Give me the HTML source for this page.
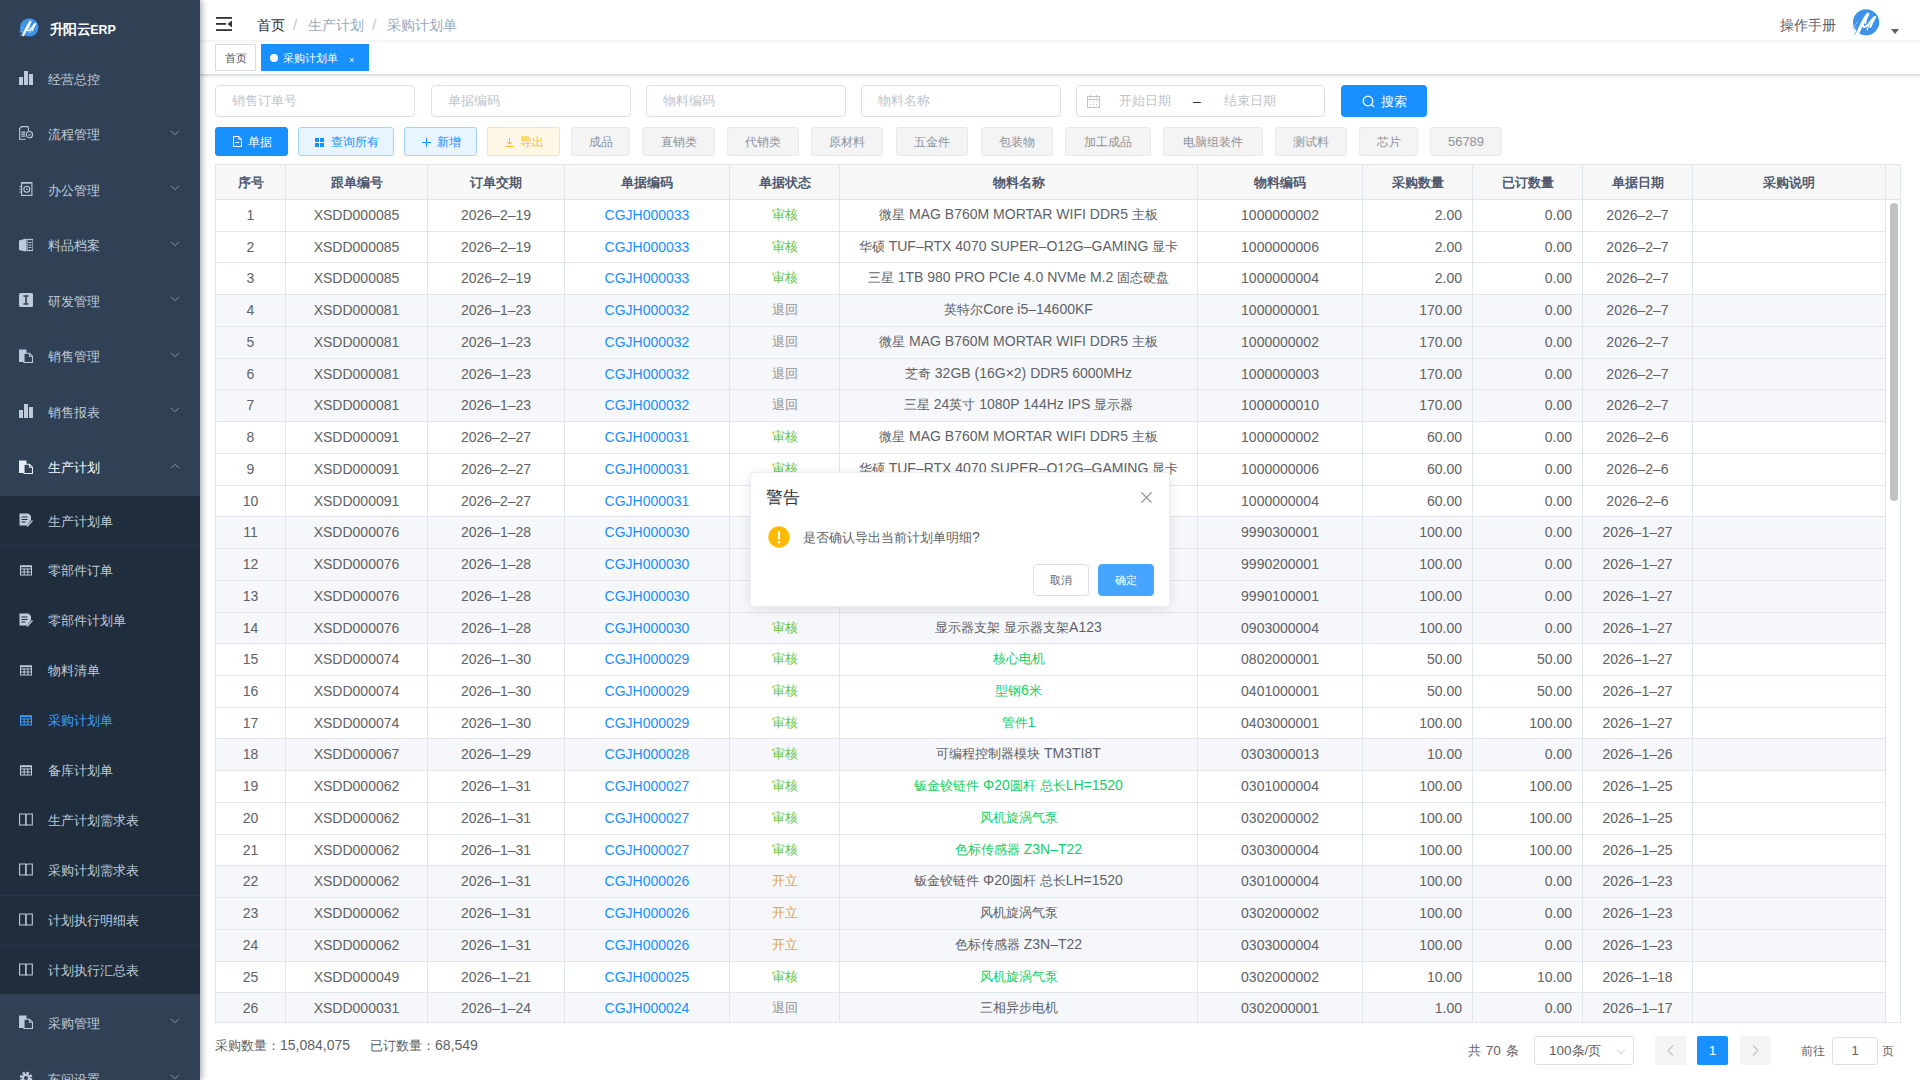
<!DOCTYPE html>
<html><head><meta charset="utf-8"><title>采购计划单</title><style>
*{box-sizing:border-box}
html,body{margin:0;padding:0;width:1920px;height:1080px;overflow:hidden;background:#fff;font-family:"Liberation Sans",sans-serif;color:#606266}
.sidebar{position:absolute;left:0;top:0;width:200px;height:1080px;background:#304156;box-shadow:2px 0 6px rgba(0,21,41,.35);z-index:5;overflow:hidden}
.logo{position:absolute;left:0;top:0;width:200px;height:50px}
.logoimg{position:absolute;left:19.5px;top:17.8px;width:19px;height:19px}
.logoimg svg{display:block}
.logotitle{position:absolute;left:50px;top:19px;line-height:20px;font-size:12.5px;font-weight:600;color:#fff}
.logotitle .z{font-size:14px;letter-spacing:-0.6px}
.mi{position:absolute;left:0;width:200px;height:56px}
.si{position:absolute;left:0;width:200px;height:50px}
.mic{position:absolute;left:19px;top:50%;margin-top:-7px;width:14px;height:14px}
.mic svg{display:block}
.mt{position:absolute;left:48px;top:50%;margin-top:-8.5px;line-height:20px;font-size:13.5px;color:#bfcbd9;white-space:nowrap}
.arr{position:absolute;left:170px;top:50%;margin-top:-4px;width:10px;height:6px}
.arr svg{display:block}
.subbg{position:absolute;left:0;top:496px;width:200px;height:498px;background:#1f2d3d}
.sline{position:absolute;left:0;width:200px;height:1px;background:#263445}
.navbar{position:absolute;left:200px;top:0;width:1720px;height:40px;background:#fff;box-shadow:0 1px 4px rgba(0,21,41,.08);z-index:3}
.hamb{position:absolute;left:16px;top:17px;width:16px;height:14px}
.hamb svg{display:block}
.bc{position:absolute;left:57px;top:14.6px;line-height:20px;font-size:14px;white-space:nowrap}
.bc .b1{color:#303133}
.bc .b2{color:#97a8be}
.bc .sep{color:#c0c4cc;margin:0 11px 0 8px;font-weight:400;font-size:15px}
.bc .z{font-size:1em}
.mt .z{font-size:0.985em}
.manual .z{font-size:1em}
.manual{position:absolute;left:1580px;top:15px;line-height:20px;font-size:14px;color:#5a5e66}
.avatar{position:absolute;left:1653px;top:8.5px;width:27px;height:27px}
.avatar svg{display:block}
.caret{position:absolute;left:1691px;top:29px;width:0;height:0;border-left:4px solid transparent;border-right:4px solid transparent;border-top:5px solid #5a5e66}
.tags{position:absolute;left:200px;top:40px;width:1720px;height:35px;background:#fff;border-bottom:1px solid #d8dce5;box-shadow:0 1px 3px 0 rgba(0,0,0,.12),0 0 3px 0 rgba(0,0,0,.04);z-index:2}
.tag{position:absolute;top:4px;height:27px;line-height:27px;font-size:12px;border:1px solid #d8dce5;color:#495060;background:#fff;padding:0 8px;white-space:nowrap}
.t1{left:15px;width:41px;text-align:center;padding:0}
.t2{left:61px;width:108px;background:#1890ff;border-color:#1890ff;color:#fff;padding-left:8px;font-size:11.5px}
.t2 .dot{display:inline-block;width:8px;height:8px;border-radius:50%;background:#fff;margin-right:5px;vertical-align:0px}
.t2 .tx{display:inline-block;font-size:9px;margin-left:11px;transform:translateY(1px)}
.inp{position:absolute;top:85px;width:200px;height:32px;border:1px solid #dcdfe6;border-radius:4px;background:#fff;font-size:14px;color:#c0c4cc;line-height:28px;padding-left:16px;white-space:nowrap}
.date{padding-left:0}
.date .cal{position:absolute;left:10px;top:9px}
.date .cal svg{display:block}
.date .ds1{position:absolute;left:42px}
.date .dsep{position:absolute;left:116px;color:#303133;top:1px}
.date .ds2{position:absolute;left:147px}
.sbtn{position:absolute;top:85px;width:86px;height:32px;border-radius:4px;background:#1890ff;color:#fff;font-size:14px;line-height:32px;padding-left:21px;white-space:nowrap}
.sbtn svg{position:absolute;left:21px;top:10px}
.sbtn > span{position:absolute;left:40px}
.btn{position:absolute;top:127px;height:29px;border-radius:3px;border:1px solid;font-size:13px;line-height:27px;text-align:center;white-space:nowrap}
.btn svg{display:inline-block;vertical-align:-0.5px;margin-right:8px;position:relative;left:1.6px}
.primary{background:#1890ff;border-color:#1890ff;color:#fff}
.pplain{background:#e8f4ff;border-color:#a3d3ff;color:#1890ff}
.wplain{background:#fff8e6;border-color:#ffe399;color:#ffba00}
.info{background:#f4f4f5;border-color:#e9e9eb;color:#909399}
.tblwrap{position:absolute;left:215px;top:164px;width:1686px;height:859px;border:1px solid #dfe6ec;border-right:none;overflow:hidden}
.tblwrap table{border-collapse:separate;border-spacing:0;table-layout:fixed}
.thead{position:absolute;left:0;top:0;height:36px;width:1685px;background:#f8f8f9}
.thead th{height:35px;padding:1.8px 0 0;font-size:14px;font-weight:700;color:#515a6e;background:#f8f8f9;border-right:1px solid #dfe6ec;border-bottom:1px solid #dfe6ec;text-align:center;white-space:nowrap}
.thead th.gut{border-right:1px solid #dfe6ec}
.tbody{position:absolute;left:0;top:35px;width:1670px}
.tbody td{height:31.74px;padding:0 10px 0.8px;font-size:14px;color:#606266;border-right:1px solid #dfe6ec;border-bottom:1px solid #dfe6ec;white-space:nowrap;overflow:hidden;background:#fff}
.tbody tr.grey td{background:#f5f7fa}
td.c{text-align:center}
td.r{text-align:right}
.link{color:#1890ff}
.st-ok{color:#67c23a}
.st-back{color:#909399}
.st-open{color:#e6a23c}
.nm-g{color:#13ce66}
.gutcol{position:absolute;left:1670px;top:35px;width:15px;height:830px;background:#fff;border-right:1px solid #dfe6ec}
.vscroll{position:absolute;left:1674px;top:38px;width:8px;height:298px;border-radius:4px;background:#c1c1c1}
.sum{position:absolute;left:215px;top:1035px;line-height:20px;font-size:14px;color:#606266;white-space:nowrap}
.pg{position:absolute;left:0;top:0}
.total{position:absolute;left:1468px;top:1041px;line-height:20px;font-size:13.5px;word-spacing:1px;color:#606266;white-space:nowrap}
.psel{position:absolute;left:1534px;top:1036px;width:100px;height:29px;border:1px solid #dcdfe6;border-radius:3px;font-size:13.5px;line-height:28px;padding-left:14px;color:#606266}
.pselarr{position:absolute;left:81px;top:12px}
.pselarr svg{display:block}
.pbtn{position:absolute;top:1036px;width:31px;height:29px;background:#f4f4f5;border-radius:2px}
.pbtn svg{position:absolute;left:12px;top:9px}
.pnum{position:absolute;left:1697px;top:1036px;width:31px;height:29px;background:#1890ff;color:#fff;border-radius:2px;font-size:13.5px;font-weight:400;line-height:29px;text-align:center}
.goto{position:absolute;left:1801px;top:1041px;line-height:20px;font-size:13px;color:#606266;white-space:nowrap}
.pinp{position:absolute;left:1832px;top:1037px;width:46px;height:28px;border:1px solid #dcdfe6;border-radius:3px;font-size:13px;line-height:26px;text-align:center;color:#606266}
.ye{position:absolute;left:1882px;top:1041px;line-height:20px;font-size:13px;color:#606266}
.mbox{position:absolute;left:750px;top:472px;width:420px;height:135px;background:#fff;border:1px solid #ebeef5;border-radius:4px;box-shadow:0 2px 12px 0 rgba(0,0,0,.1);z-index:10}
.mtitle{position:absolute;left:15px;top:14px;line-height:20px;font-size:18px;color:#303133}
.mclose{position:absolute;left:390px;top:18.6px;width:11px;height:11px}
.mclose svg{display:block}
.mwarn{position:absolute;left:17px;top:53px;width:22px;height:22px}
.mwarn svg{display:block}
.mmsg{position:absolute;left:52px;top:54px;line-height:20px;font-size:14px;color:#606266}
.mb{position:absolute;top:91px;height:32px;border-radius:4px;font-size:12px;line-height:30px;text-align:center;border:1px solid}
.cancel{left:282px;width:56px;background:#fff;border-color:#dcdfe6;color:#606266}
.ok{left:347px;width:56px;background:#46a6ff;border-color:#46a6ff;color:#fff}
.z{font-size:0.95em}</style></head>
<body>
<div class="sidebar"><div class="logo"><div class="logoimg"><svg width="19" height="19" viewBox="0 0 27 27" style="overflow:visible"><circle cx="13.1" cy="13.3" r="13.1" fill="#3d92ea"/><g fill="none" stroke="#fff" stroke-linecap="round" stroke-linejoin="round"><path d="M4.6 24.3 C7.8 17.5 11 10 14.8 5.3" stroke-width="3.2"/><path d="M14.8 5.6 C13.6 8.6 12.6 11.6 12.2 14" stroke-width="2"/><path d="M9.9 13.6 C9.7 15.6 10 17.8 11 18 C13 18 16 15 18.2 11.8 C19.2 10 20.5 8.4 22.2 8" stroke-width="2"/><path d="M21.8 8.4 C20 11.5 18.5 15 17.3 17.8" stroke-width="2.2"/><path d="M16.4 14.2 L14.1 21" stroke-width="1.1"/><path d="M-0.3 19.6 L4.6 12.8" stroke="#9cc6f3" stroke-width="0.9"/><path d="M1.4 25.4 L4.2 21.6" stroke="#9cc6f3" stroke-width="1.3"/><path d="M0.5 21.5 L2.5 19" stroke="#b5d5f6" stroke-width="0.8"/></g></svg></div><div class="logotitle"><span class="z">升阳云</span>ERP</div></div><div class="mi" style="top:50.00px"><span class="mic"><svg width="14" height="14" viewBox="0 0 14 14"><rect x="0" y="6" width="4" height="8" fill="#bfcbd9"/><rect x="5" y="0" width="4" height="14" fill="#bfcbd9"/><rect x="10" y="3" width="4" height="11" fill="#bfcbd9"/></svg></span><span class="mt" style="color:#bfcbd9"><span class="z">经营总控</span></span></div><div class="mi" style="top:105.57px"><span class="mic"><svg width="14" height="15" viewBox="0 0 14 15" fill="none" stroke="#bfcbd9" stroke-width="1.1" style="margin-top:-0.3px"><path d="M9.4 5V1.6Q9.4 0.6 8.4 0.6H2.6L0.6 2.6V13.3H6.5"/><path d="M2.3 6.2h4.2M2.3 8.2h3.8M2.3 10.2h3.8" stroke-width="1.3"/><circle cx="10.4" cy="8.6" r="3.1"/><path d="M9.1 8.7l1 1 1.7-1.9" stroke-width="1"/></svg></span><span class="mt" style="color:#bfcbd9"><span class="z">流程管理</span></span><span class="arr"><svg width="10" height="6" viewBox="0 0 10 6" fill="none" stroke="#909399" stroke-width="1"><path d="M1 0.8L5 4.8L9 0.8"/></svg></span></div><div class="mi" style="top:161.14px"><span class="mic"><svg width="14" height="14" viewBox="0 0 14 14" fill="none" stroke="#bfcbd9" stroke-width="1.1"><rect x="2.6" y="0.6" width="10.3" height="12.8"/><path d="M2.6 0.9h10.3" stroke-width="1.5"/><circle cx="7.8" cy="7.3" r="3"/><path d="M7.8 5.7v1.8h1.4" stroke-width="0.9"/><path d="M0.5 4.5h2M0.5 7.3h2M0.5 10h2"/></svg></span><span class="mt" style="color:#bfcbd9"><span class="z">办公管理</span></span><span class="arr"><svg width="10" height="6" viewBox="0 0 10 6" fill="none" stroke="#909399" stroke-width="1"><path d="M1 0.8L5 4.8L9 0.8"/></svg></span></div><div class="mi" style="top:216.71px"><span class="mic"><svg width="14" height="14" viewBox="0 0 14 14"><path d="M0 2.5L7 0.5V13.5L0 12Z" fill="#bfcbd9"/><rect x="8" y="1.5" width="6" height="11" fill="none" stroke="#bfcbd9" stroke-width="1.2"/><path d="M9.5 4.5h3M9.5 7h3M9.5 9.5h3" stroke="#bfcbd9" stroke-width="1.2"/></svg></span><span class="mt" style="color:#bfcbd9"><span class="z">料品档案</span></span><span class="arr"><svg width="10" height="6" viewBox="0 0 10 6" fill="none" stroke="#909399" stroke-width="1"><path d="M1 0.8L5 4.8L9 0.8"/></svg></span></div><div class="mi" style="top:272.28px"><span class="mic"><svg width="14" height="14" viewBox="0 0 14 14"><rect x="0" y="0" width="14" height="14" rx="1.5" fill="#bfcbd9"/><path d="M4.5 3h5M4.5 11h5M7 3v8" stroke="#304156" stroke-width="1.6"/></svg></span><span class="mt" style="color:#bfcbd9"><span class="z">研发管理</span></span><span class="arr"><svg width="10" height="6" viewBox="0 0 10 6" fill="none" stroke="#909399" stroke-width="1"><path d="M1 0.8L5 4.8L9 0.8"/></svg></span></div><div class="mi" style="top:327.85px"><span class="mic"><svg width="14" height="14" viewBox="0 0 14 14"><path d="M0 0.5h7.5v12.5H0Z" fill="#bfcbd9"/><path d="M5 4.2h5.5l3 3V13.5H5Z" fill="#304156" stroke="#bfcbd9" stroke-width="1.1"/><path d="M10.5 4.2V7.2h3" fill="none" stroke="#bfcbd9" stroke-width="1.1"/></svg></span><span class="mt" style="color:#bfcbd9"><span class="z">销售管理</span></span><span class="arr"><svg width="10" height="6" viewBox="0 0 10 6" fill="none" stroke="#909399" stroke-width="1"><path d="M1 0.8L5 4.8L9 0.8"/></svg></span></div><div class="mi" style="top:383.42px"><span class="mic"><svg width="14" height="14" viewBox="0 0 14 14"><rect x="0" y="6" width="4" height="8" fill="#bfcbd9"/><rect x="5" y="0" width="4" height="14" fill="#bfcbd9"/><rect x="10" y="3" width="4" height="11" fill="#bfcbd9"/></svg></span><span class="mt" style="color:#bfcbd9"><span class="z">销售报表</span></span><span class="arr"><svg width="10" height="6" viewBox="0 0 10 6" fill="none" stroke="#909399" stroke-width="1"><path d="M1 0.8L5 4.8L9 0.8"/></svg></span></div><div class="mi" style="top:438.99px"><span class="mic"><svg width="14" height="14" viewBox="0 0 14 14"><path d="M0 0.5h7.5v12.5H0Z" fill="#e8eef5"/><path d="M5 4.2h5.5l3 3V13.5H5Z" fill="#304156" stroke="#e8eef5" stroke-width="1.1"/><path d="M10.5 4.2V7.2h3" fill="none" stroke="#e8eef5" stroke-width="1.1"/></svg></span><span class="mt" style="color:#fff"><span class="z">生产计划</span></span><span class="arr"><svg width="10" height="6" viewBox="0 0 10 6" fill="none" stroke="#909399" stroke-width="1"><path d="M1 5.2L5 1.2L9 5.2"/></svg></span></div><div class="subbg"></div><div class="si" style="top:495.00px"><span class="mic"><svg width="14" height="14" viewBox="0 0 14 14"><path d="M0.5 0.5h9l2.5 2.5v4l-4 5.5H0.5Z" fill="#bfcbd9"/><path d="M2.5 4h6M2.5 6.5h6M2.5 9h4" stroke="#1f2d3d" stroke-width="1.2"/><path d="M8 13.5l5.5-6" stroke="#bfcbd9" stroke-width="1.3"/></svg></span><span class="mt" style="color:#bfcbd9"><span class="z">生产计划单</span></span></div><div class="si" style="top:544.90px"><span class="mic"><svg width="14" height="14" viewBox="0 0 14 14" fill="none" stroke="#bfcbd9" stroke-width="1"><rect x="1.5" y="2.8" width="11" height="9.2"/><path d="M1.5 3.5h11" stroke-width="1.4"/><path d="M1.5 6h11M1.5 9h11M5.2 5.5v6.5M8.8 5.5v6.5"/></svg></span><span class="mt" style="color:#bfcbd9"><span class="z">零部件订单</span></span></div><div class="si" style="top:594.80px"><span class="mic"><svg width="14" height="14" viewBox="0 0 14 14"><path d="M0.5 0.5h9l2.5 2.5v4l-4 5.5H0.5Z" fill="#bfcbd9"/><path d="M2.5 4h6M2.5 6.5h6M2.5 9h4" stroke="#1f2d3d" stroke-width="1.2"/><path d="M8 13.5l5.5-6" stroke="#bfcbd9" stroke-width="1.3"/></svg></span><span class="mt" style="color:#bfcbd9"><span class="z">零部件计划单</span></span></div><div class="si" style="top:644.70px"><span class="mic"><svg width="14" height="14" viewBox="0 0 14 14" fill="none" stroke="#bfcbd9" stroke-width="1"><rect x="1.5" y="2.8" width="11" height="9.2"/><path d="M1.5 3.5h11" stroke-width="1.4"/><path d="M1.5 6h11M1.5 9h11M5.2 5.5v6.5M8.8 5.5v6.5"/></svg></span><span class="mt" style="color:#bfcbd9"><span class="z">物料清单</span></span></div><div class="si" style="top:694.60px"><span class="mic"><svg width="14" height="14" viewBox="0 0 14 14" fill="none" stroke="#409eff" stroke-width="1"><rect x="1.5" y="2.8" width="11" height="9.2"/><path d="M1.5 3.5h11" stroke-width="1.4"/><path d="M1.5 6h11M1.5 9h11M5.2 5.5v6.5M8.8 5.5v6.5"/></svg></span><span class="mt" style="color:#409eff"><span class="z">采购计划单</span></span></div><div class="si" style="top:744.50px"><span class="mic"><svg width="14" height="14" viewBox="0 0 14 14" fill="none" stroke="#bfcbd9" stroke-width="1"><rect x="1.5" y="2.8" width="11" height="9.2"/><path d="M1.5 3.5h11" stroke-width="1.4"/><path d="M1.5 6h11M1.5 9h11M5.2 5.5v6.5M8.8 5.5v6.5"/></svg></span><span class="mt" style="color:#bfcbd9"><span class="z">备库计划单</span></span></div><div class="si" style="top:794.40px"><span class="mic"><svg width="14" height="14" viewBox="0 0 14 14" fill="none" stroke="#bfcbd9" stroke-width="1.1"><path d="M0.6 2h6.2v11H0.6Z"/><path d="M7 3.2C7.3 2.3 8 2 9 2h4.3v11H7"/><path d="M7 2.8V13.4"/></svg></span><span class="mt" style="color:#bfcbd9"><span class="z">生产计划需求表</span></span></div><div class="si" style="top:844.30px"><span class="mic"><svg width="14" height="14" viewBox="0 0 14 14" fill="none" stroke="#bfcbd9" stroke-width="1.1"><path d="M0.6 2h6.2v11H0.6Z"/><path d="M7 3.2C7.3 2.3 8 2 9 2h4.3v11H7"/><path d="M7 2.8V13.4"/></svg></span><span class="mt" style="color:#bfcbd9"><span class="z">采购计划需求表</span></span></div><div class="si" style="top:894.20px"><span class="mic"><svg width="14" height="14" viewBox="0 0 14 14" fill="none" stroke="#bfcbd9" stroke-width="1.1"><path d="M0.6 2h6.2v11H0.6Z"/><path d="M7 3.2C7.3 2.3 8 2 9 2h4.3v11H7"/><path d="M7 2.8V13.4"/></svg></span><span class="mt" style="color:#bfcbd9"><span class="z">计划执行明细表</span></span></div><div class="si" style="top:944.10px"><span class="mic"><svg width="14" height="14" viewBox="0 0 14 14" fill="none" stroke="#bfcbd9" stroke-width="1.1"><path d="M0.6 2h6.2v11H0.6Z"/><path d="M7 3.2C7.3 2.3 8 2 9 2h4.3v11H7"/><path d="M7 2.8V13.4"/></svg></span><span class="mt" style="color:#bfcbd9"><span class="z">计划执行汇总表</span></span></div><div class="sline" style="top:545px"></div><div class="sline" style="top:895px"></div><div class="sline" style="top:944.5px"></div><div class="mi" style="top:994px"><span class="mic"><svg width="14" height="14" viewBox="0 0 14 14"><path d="M0 0.5h7.5v12.5H0Z" fill="#bfcbd9"/><path d="M5 4.2h5.5l3 3V13.5H5Z" fill="#304156" stroke="#bfcbd9" stroke-width="1.1"/><path d="M10.5 4.2V7.2h3" fill="none" stroke="#bfcbd9" stroke-width="1.1"/></svg></span><span class="mt"><span class="z">采购管理</span></span><span class="arr"><svg width="10" height="6" viewBox="0 0 10 6" fill="none" stroke="#909399" stroke-width="1"><path d="M1 0.8L5 4.8L9 0.8"/></svg></span></div><div class="mi" style="top:1050px"><span class="mic"><svg width="14" height="14" viewBox="0 0 14 14"><circle cx="7" cy="7" r="5" fill="none" stroke="#bfcbd9" stroke-width="2.6" stroke-dasharray="2.4 1.5"/><circle cx="7" cy="7" r="4.2" fill="#bfcbd9"/><circle cx="7" cy="7" r="2" fill="#304156"/></svg></span><span class="mt"><span class="z">车间设置</span></span><span class="arr"><svg width="10" height="6" viewBox="0 0 10 6" fill="none" stroke="#909399" stroke-width="1"><path d="M1 0.8L5 4.8L9 0.8"/></svg></span></div></div>
<div class="navbar">
<div class="hamb"><svg width="16" height="14" viewBox="0 0 16 14"><rect x="0" y="0" width="16" height="1.8" fill="#303133"/><rect x="0" y="6" width="10" height="1.8" fill="#303133"/><rect x="0" y="12.2" width="16" height="1.8" fill="#303133"/><path d="M16 3.5L11.5 7L16 10.5Z" fill="#303133"/></svg></div>
<div class="bc"><span class="b1"><span class="z">首页</span></span><span class="sep">/</span><span class="b2"><span class="z">生产计划</span></span><span class="sep">/</span><span class="b2"><span class="z">采购计划单</span></span></div>
<div class="manual"><span class="z">操作手册</span></div>
<div class="avatar"><svg width="27" height="27" viewBox="0 0 27 27" style="overflow:visible"><circle cx="13.1" cy="13.3" r="13.1" fill="#3d92ea"/><g fill="none" stroke="#fff" stroke-linecap="round" stroke-linejoin="round"><path d="M4.6 24.3 C7.8 17.5 11 10 14.8 5.3" stroke-width="3.2"/><path d="M14.8 5.6 C13.6 8.6 12.6 11.6 12.2 14" stroke-width="2"/><path d="M9.9 13.6 C9.7 15.6 10 17.8 11 18 C13 18 16 15 18.2 11.8 C19.2 10 20.5 8.4 22.2 8" stroke-width="2"/><path d="M21.8 8.4 C20 11.5 18.5 15 17.3 17.8" stroke-width="2.2"/><path d="M16.4 14.2 L14.1 21" stroke-width="1.1"/><path d="M-0.3 19.6 L4.6 12.8" stroke="#9cc6f3" stroke-width="0.9"/><path d="M1.4 25.4 L4.2 21.6" stroke="#9cc6f3" stroke-width="1.3"/><path d="M0.5 21.5 L2.5 19" stroke="#b5d5f6" stroke-width="0.8"/></g></svg></div>
<div class="caret"></div>
</div>
<div class="tags">
<div class="tag t1"><span class="z">首页</span></div>
<div class="tag t2"><span class="dot"></span><span class="z">采购计划单</span><span class="tx">×</span></div>
</div>
<div class="inp" style="left:215px"><span class="z">销售订单号</span></div>
<div class="inp" style="left:431px"><span class="z">单据编码</span></div>
<div class="inp" style="left:646px"><span class="z">物料编码</span></div>
<div class="inp" style="left:861px"><span class="z">物料名称</span></div>
<div class="inp date" style="left:1076px;width:249px"><span class="cal"><svg width="13" height="13" viewBox="0 0 13 13" fill="none" stroke="#c0c4cc" stroke-width="1"><rect x="0.5" y="1.5" width="12" height="11"/><path d="M0.5 4.5h12M3.5 0v3M9.5 0v3"/><path d="M3 7h1M6 7h1M9 7h1M3 9.5h1M6 9.5h1M9 9.5h1" stroke-width="1"/></svg></span><span class="ds1"><span class="z">开始日期</span></span><span class="dsep">–</span><span class="ds2"><span class="z">结束日期</span></span></div>
<div class="sbtn" style="left:1341px"><svg width="13" height="13" viewBox="0 0 13 13" fill="none" stroke="#fff" stroke-width="1.3"><circle cx="6" cy="6" r="4.8"/><path d="M9.5 9.5L12 12"/></svg><span><span class="z">搜索</span></span></div>
<div class="btn primary" style="left:215px;width:73px"><svg width="9" height="11" viewBox="0 0 9 11" fill="none" stroke="#fff" stroke-width="1"><path d="M0.5 0.5H5.8L8.5 3.2V10.5H0.5Z"/><path d="M5.8 0.5V3.2H8.5"/><path d="M2.5 6.5H6"/></svg><span><span class="z">单据</span></span></div><div class="btn pplain" style="left:298px;width:96px"><svg width="9" height="9" viewBox="0 0 9 9" fill="#1890ff"><rect x="0" y="0" width="4" height="4"/><rect x="5" y="0" width="4" height="4"/><rect x="0" y="5" width="4" height="4"/><rect x="5" y="5" width="4" height="4"/></svg><span><span class="z">查询所有</span></span></div><div class="btn pplain" style="left:404px;width:73px"><svg width="9" height="9" viewBox="0 0 9 9" stroke="#1890ff" stroke-width="1"><path d="M4.5 0v9M0 4.5h9"/></svg><span><span class="z">新增</span></span></div><div class="btn wplain" style="left:487px;width:73px"><svg width="9" height="9" viewBox="0 0 9 9" fill="none" stroke="#ffba00" stroke-width="1"><path d="M4.5 0v6M2 3.8l2.5 2.4 2.5-2.4M0.5 8.5h8"/></svg><span><span class="z">导出</span></span></div><div class="btn info" style="left:571px;width:59px"><span><span class="z">成品</span></span></div><div class="btn info" style="left:642px;width:73px"><span><span class="z">直销类</span></span></div><div class="btn info" style="left:727px;width:72px"><span><span class="z">代销类</span></span></div><div class="btn info" style="left:811px;width:72px"><span><span class="z">原材料</span></span></div><div class="btn info" style="left:896px;width:72px"><span><span class="z">五金件</span></span></div><div class="btn info" style="left:981px;width:72px"><span><span class="z">包装物</span></span></div><div class="btn info" style="left:1065px;width:86px"><span><span class="z">加工成品</span></span></div><div class="btn info" style="left:1163px;width:100px"><span><span class="z">电脑组装件</span></span></div><div class="btn info" style="left:1275px;width:72px"><span><span class="z">测试料</span></span></div><div class="btn info" style="left:1359px;width:59px"><span><span class="z">芯片</span></span></div><div class="btn info" style="left:1430px;width:72px"><span>56789</span></div>
<div class="tblwrap">
<div class="thead"><table><colgroup><col style="width:70px"><col style="width:142px"><col style="width:137px"><col style="width:165px"><col style="width:110px"><col style="width:358px"><col style="width:165px"><col style="width:110px"><col style="width:110px"><col style="width:110px"><col style="width:193px"><col style="width:15px"></colgroup><tr><th style="width:70px"><span class="z">序号</span></th><th style="width:142px"><span class="z">跟单编号</span></th><th style="width:137px"><span class="z">订单交期</span></th><th style="width:165px"><span class="z">单据编码</span></th><th style="width:110px"><span class="z">单据状态</span></th><th style="width:358px"><span class="z">物料名称</span></th><th style="width:165px"><span class="z">物料编码</span></th><th style="width:110px"><span class="z">采购数量</span></th><th style="width:110px"><span class="z">已订数量</span></th><th style="width:110px"><span class="z">单据日期</span></th><th style="width:193px"><span class="z">采购说明</span></th><th class="gut" style="width:15px"></th></tr></table></div>
<div class="tbody"><table><colgroup><col style="width:70px"><col style="width:142px"><col style="width:137px"><col style="width:165px"><col style="width:110px"><col style="width:358px"><col style="width:165px"><col style="width:110px"><col style="width:110px"><col style="width:110px"><col style="width:193px"></colgroup><tr class=""><td class="c">1</td><td class="c">XSDD000085</td><td class="c">2026–2–19</td><td class="c"><span class="link">CGJH000033</span></td><td class="c"><span class="st-ok"><span class="z">审核</span></span></td><td class="c"><span class=""><span class="z">微星</span> MAG B760M MORTAR WIFI DDR5 <span class="z">主板</span></span></td><td class="c">1000000002</td><td class="r">2.00</td><td class="r">0.00</td><td class="c">2026–2–7</td><td class="c"></td></tr><tr class=""><td class="c">2</td><td class="c">XSDD000085</td><td class="c">2026–2–19</td><td class="c"><span class="link">CGJH000033</span></td><td class="c"><span class="st-ok"><span class="z">审核</span></span></td><td class="c"><span class=""><span class="z">华硕</span> TUF–RTX 4070 SUPER–O12G–GAMING <span class="z">显卡</span></span></td><td class="c">1000000006</td><td class="r">2.00</td><td class="r">0.00</td><td class="c">2026–2–7</td><td class="c"></td></tr><tr class=""><td class="c">3</td><td class="c">XSDD000085</td><td class="c">2026–2–19</td><td class="c"><span class="link">CGJH000033</span></td><td class="c"><span class="st-ok"><span class="z">审核</span></span></td><td class="c"><span class=""><span class="z">三星</span> 1TB 980 PRO PCIe 4.0 NVMe M.2 <span class="z">固态硬盘</span></span></td><td class="c">1000000004</td><td class="r">2.00</td><td class="r">0.00</td><td class="c">2026–2–7</td><td class="c"></td></tr><tr class="grey"><td class="c">4</td><td class="c">XSDD000081</td><td class="c">2026–1–23</td><td class="c"><span class="link">CGJH000032</span></td><td class="c"><span class="st-back"><span class="z">退回</span></span></td><td class="c"><span class=""><span class="z">英特尔</span>Core i5–14600KF</span></td><td class="c">1000000001</td><td class="r">170.00</td><td class="r">0.00</td><td class="c">2026–2–7</td><td class="c"></td></tr><tr class="grey"><td class="c">5</td><td class="c">XSDD000081</td><td class="c">2026–1–23</td><td class="c"><span class="link">CGJH000032</span></td><td class="c"><span class="st-back"><span class="z">退回</span></span></td><td class="c"><span class=""><span class="z">微星</span> MAG B760M MORTAR WIFI DDR5 <span class="z">主板</span></span></td><td class="c">1000000002</td><td class="r">170.00</td><td class="r">0.00</td><td class="c">2026–2–7</td><td class="c"></td></tr><tr class="grey"><td class="c">6</td><td class="c">XSDD000081</td><td class="c">2026–1–23</td><td class="c"><span class="link">CGJH000032</span></td><td class="c"><span class="st-back"><span class="z">退回</span></span></td><td class="c"><span class=""><span class="z">芝奇</span> 32GB (16G×2) DDR5 6000MHz</span></td><td class="c">1000000003</td><td class="r">170.00</td><td class="r">0.00</td><td class="c">2026–2–7</td><td class="c"></td></tr><tr class="grey"><td class="c">7</td><td class="c">XSDD000081</td><td class="c">2026–1–23</td><td class="c"><span class="link">CGJH000032</span></td><td class="c"><span class="st-back"><span class="z">退回</span></span></td><td class="c"><span class=""><span class="z">三星</span> 24<span class="z">英寸</span> 1080P 144Hz IPS <span class="z">显示器</span></span></td><td class="c">1000000010</td><td class="r">170.00</td><td class="r">0.00</td><td class="c">2026–2–7</td><td class="c"></td></tr><tr class=""><td class="c">8</td><td class="c">XSDD000091</td><td class="c">2026–2–27</td><td class="c"><span class="link">CGJH000031</span></td><td class="c"><span class="st-ok"><span class="z">审核</span></span></td><td class="c"><span class=""><span class="z">微星</span> MAG B760M MORTAR WIFI DDR5 <span class="z">主板</span></span></td><td class="c">1000000002</td><td class="r">60.00</td><td class="r">0.00</td><td class="c">2026–2–6</td><td class="c"></td></tr><tr class=""><td class="c">9</td><td class="c">XSDD000091</td><td class="c">2026–2–27</td><td class="c"><span class="link">CGJH000031</span></td><td class="c"><span class="st-ok"><span class="z">审核</span></span></td><td class="c"><span class=""><span class="z">华硕</span> TUF–RTX 4070 SUPER–O12G–GAMING <span class="z">显卡</span></span></td><td class="c">1000000006</td><td class="r">60.00</td><td class="r">0.00</td><td class="c">2026–2–6</td><td class="c"></td></tr><tr class=""><td class="c">10</td><td class="c">XSDD000091</td><td class="c">2026–2–27</td><td class="c"><span class="link">CGJH000031</span></td><td class="c"><span class="st-ok"><span class="z">审核</span></span></td><td class="c"><span class=""><span class="z">三星</span> 1TB 980 PRO PCIe 4.0 NVMe M.2 <span class="z">固态硬盘</span></span></td><td class="c">1000000004</td><td class="r">60.00</td><td class="r">0.00</td><td class="c">2026–2–6</td><td class="c"></td></tr><tr class="grey"><td class="c">11</td><td class="c">XSDD000076</td><td class="c">2026–1–28</td><td class="c"><span class="link">CGJH000030</span></td><td class="c"><span class="st-ok"><span class="z">审核</span></span></td><td class="c"><span class=""><span class="z">显示器</span></span></td><td class="c">9990300001</td><td class="r">100.00</td><td class="r">0.00</td><td class="c">2026–1–27</td><td class="c"></td></tr><tr class="grey"><td class="c">12</td><td class="c">XSDD000076</td><td class="c">2026–1–28</td><td class="c"><span class="link">CGJH000030</span></td><td class="c"><span class="st-ok"><span class="z">审核</span></span></td><td class="c"><span class=""><span class="z">显示器支架</span></span></td><td class="c">9990200001</td><td class="r">100.00</td><td class="r">0.00</td><td class="c">2026–1–27</td><td class="c"></td></tr><tr class="grey"><td class="c">13</td><td class="c">XSDD000076</td><td class="c">2026–1–28</td><td class="c"><span class="link">CGJH000030</span></td><td class="c"><span class="st-ok"><span class="z">审核</span></span></td><td class="c"><span class=""><span class="z">显示器支架</span></span></td><td class="c">9990100001</td><td class="r">100.00</td><td class="r">0.00</td><td class="c">2026–1–27</td><td class="c"></td></tr><tr class="grey"><td class="c">14</td><td class="c">XSDD000076</td><td class="c">2026–1–28</td><td class="c"><span class="link">CGJH000030</span></td><td class="c"><span class="st-ok"><span class="z">审核</span></span></td><td class="c"><span class=""><span class="z">显示器支架</span> <span class="z">显示器支架</span>A123</span></td><td class="c">0903000004</td><td class="r">100.00</td><td class="r">0.00</td><td class="c">2026–1–27</td><td class="c"></td></tr><tr class=""><td class="c">15</td><td class="c">XSDD000074</td><td class="c">2026–1–30</td><td class="c"><span class="link">CGJH000029</span></td><td class="c"><span class="st-ok"><span class="z">审核</span></span></td><td class="c"><span class="nm-g"><span class="z">核心电机</span></span></td><td class="c">0802000001</td><td class="r">50.00</td><td class="r">50.00</td><td class="c">2026–1–27</td><td class="c"></td></tr><tr class=""><td class="c">16</td><td class="c">XSDD000074</td><td class="c">2026–1–30</td><td class="c"><span class="link">CGJH000029</span></td><td class="c"><span class="st-ok"><span class="z">审核</span></span></td><td class="c"><span class="nm-g"><span class="z">型钢</span>6<span class="z">米</span></span></td><td class="c">0401000001</td><td class="r">50.00</td><td class="r">50.00</td><td class="c">2026–1–27</td><td class="c"></td></tr><tr class=""><td class="c">17</td><td class="c">XSDD000074</td><td class="c">2026–1–30</td><td class="c"><span class="link">CGJH000029</span></td><td class="c"><span class="st-ok"><span class="z">审核</span></span></td><td class="c"><span class="nm-g"><span class="z">管件</span>1</span></td><td class="c">0403000001</td><td class="r">100.00</td><td class="r">100.00</td><td class="c">2026–1–27</td><td class="c"></td></tr><tr class="grey"><td class="c">18</td><td class="c">XSDD000067</td><td class="c">2026–1–29</td><td class="c"><span class="link">CGJH000028</span></td><td class="c"><span class="st-ok"><span class="z">审核</span></span></td><td class="c"><span class=""><span class="z">可编程控制器模块</span> TM3TI8T</span></td><td class="c">0303000013</td><td class="r">10.00</td><td class="r">0.00</td><td class="c">2026–1–26</td><td class="c"></td></tr><tr class=""><td class="c">19</td><td class="c">XSDD000062</td><td class="c">2026–1–31</td><td class="c"><span class="link">CGJH000027</span></td><td class="c"><span class="st-ok"><span class="z">审核</span></span></td><td class="c"><span class="nm-g"><span class="z">钣金铰链件</span> Φ20<span class="z">圆杆</span> <span class="z">总长</span>LH=1520</span></td><td class="c">0301000004</td><td class="r">100.00</td><td class="r">100.00</td><td class="c">2026–1–25</td><td class="c"></td></tr><tr class=""><td class="c">20</td><td class="c">XSDD000062</td><td class="c">2026–1–31</td><td class="c"><span class="link">CGJH000027</span></td><td class="c"><span class="st-ok"><span class="z">审核</span></span></td><td class="c"><span class="nm-g"><span class="z">风机旋涡气泵</span></span></td><td class="c">0302000002</td><td class="r">100.00</td><td class="r">100.00</td><td class="c">2026–1–25</td><td class="c"></td></tr><tr class=""><td class="c">21</td><td class="c">XSDD000062</td><td class="c">2026–1–31</td><td class="c"><span class="link">CGJH000027</span></td><td class="c"><span class="st-ok"><span class="z">审核</span></span></td><td class="c"><span class="nm-g"><span class="z">色标传感器</span> Z3N–T22</span></td><td class="c">0303000004</td><td class="r">100.00</td><td class="r">100.00</td><td class="c">2026–1–25</td><td class="c"></td></tr><tr class="grey"><td class="c">22</td><td class="c">XSDD000062</td><td class="c">2026–1–31</td><td class="c"><span class="link">CGJH000026</span></td><td class="c"><span class="st-open"><span class="z">开立</span></span></td><td class="c"><span class=""><span class="z">钣金铰链件</span> Φ20<span class="z">圆杆</span> <span class="z">总长</span>LH=1520</span></td><td class="c">0301000004</td><td class="r">100.00</td><td class="r">0.00</td><td class="c">2026–1–23</td><td class="c"></td></tr><tr class="grey"><td class="c">23</td><td class="c">XSDD000062</td><td class="c">2026–1–31</td><td class="c"><span class="link">CGJH000026</span></td><td class="c"><span class="st-open"><span class="z">开立</span></span></td><td class="c"><span class=""><span class="z">风机旋涡气泵</span></span></td><td class="c">0302000002</td><td class="r">100.00</td><td class="r">0.00</td><td class="c">2026–1–23</td><td class="c"></td></tr><tr class="grey"><td class="c">24</td><td class="c">XSDD000062</td><td class="c">2026–1–31</td><td class="c"><span class="link">CGJH000026</span></td><td class="c"><span class="st-open"><span class="z">开立</span></span></td><td class="c"><span class=""><span class="z">色标传感器</span> Z3N–T22</span></td><td class="c">0303000004</td><td class="r">100.00</td><td class="r">0.00</td><td class="c">2026–1–23</td><td class="c"></td></tr><tr class=""><td class="c">25</td><td class="c">XSDD000049</td><td class="c">2026–1–21</td><td class="c"><span class="link">CGJH000025</span></td><td class="c"><span class="st-ok"><span class="z">审核</span></span></td><td class="c"><span class="nm-g"><span class="z">风机旋涡气泵</span></span></td><td class="c">0302000002</td><td class="r">10.00</td><td class="r">10.00</td><td class="c">2026–1–18</td><td class="c"></td></tr><tr class="grey"><td class="c">26</td><td class="c">XSDD000031</td><td class="c">2026–1–24</td><td class="c"><span class="link">CGJH000024</span></td><td class="c"><span class="st-back"><span class="z">退回</span></span></td><td class="c"><span class=""><span class="z">三相异步电机</span></span></td><td class="c">0302000001</td><td class="r">1.00</td><td class="r">0.00</td><td class="c">2026–1–17</td><td class="c"></td></tr></table></div>
<div class="gutcol"></div>
<div class="vscroll"></div>
</div>
<div class="sum"><span><span class="z">采购数量：</span>15,084,075</span><span style="margin-left:20px"><span class="z">已订数量：</span>68,549</span></div>
<div class="pg">
<span class="total"><span class="z">共</span> 70 <span class="z">条</span></span>
<div class="psel">100<span class="z">条</span>/<span class="z">页</span><span class="pselarr"><svg width="10" height="6" viewBox="0 0 10 6" fill="none" stroke="#c0c4cc" stroke-width="1"><path d="M1 0.8L5 4.8L9 0.8"/></svg></span></div>
<div class="pbtn" style="left:1655px"><svg width="7" height="11" viewBox="0 0 7 11" fill="none" stroke="#c0c4cc" stroke-width="1.1"><path d="M6 0.5L1 5.5L6 10.5"/></svg></div>
<div class="pnum">1</div>
<div class="pbtn" style="left:1740px"><svg width="7" height="11" viewBox="0 0 7 11" fill="none" stroke="#c0c4cc" stroke-width="1.1"><path d="M1 0.5L6 5.5L1 10.5"/></svg></div>
<span class="goto"><span class="z">前往</span></span><div class="pinp">1</div><span class="ye"><span class="z">页</span></span>
</div>
<div class="mbox">
<div class="mtitle"><span class="z">警告</span></div>
<div class="mclose"><svg width="11" height="11" viewBox="0 0 11 11" stroke="#909399" stroke-width="1.1"><path d="M0.5 0.5L10.5 10.5M10.5 0.5L0.5 10.5"/></svg></div>
<div class="mwarn"><svg width="22" height="22" viewBox="0 0 22 22"><circle cx="11" cy="11" r="10.7" fill="#ffba00"/><rect x="9.9" y="5" width="2.2" height="8.5" rx="1.1" fill="#fff"/><circle cx="11" cy="16.3" r="1.2" fill="#fff"/></svg></div>
<div class="mmsg"><span class="z">是否确认导出当前计划单明细</span>?</div>
<div class="mb cancel"><span class="z">取消</span></div>
<div class="mb ok"><span class="z">确定</span></div>
</div>
</body></html>
